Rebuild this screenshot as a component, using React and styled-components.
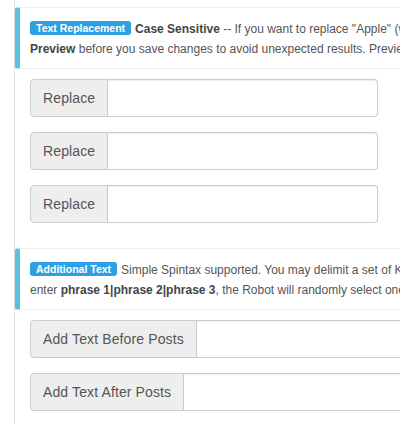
import React from 'react'
import styled, { createGlobalStyle } from 'styled-components'

const GlobalStyle = createGlobalStyle`
  body {
    margin: 0;
    background: #fff;
    font-family: "Liberation Sans", Arial, sans-serif;
  }
`

const Page = styled.div`
  margin-left: 14px;
  border-left: 1px solid #ddd;
  min-height: 424px;
  padding-top: 7px;
  overflow: hidden;
`

const Callout = styled.div`
  border: 1px solid #eee;
  border-left: 5px solid #5bc0de;
  border-radius: 3px;
  margin-right: -20px;
  padding: 11px 10px 9px;
  font-size: 12px;
  line-height: 20px;
  color: #555;
  white-space: nowrap;

  b {
    color: #444;
  }
`

const Line = styled.div`
  overflow: hidden;
`

const Badge = styled.span`
  display: inline-block;
  background: #2d9fe2;
  color: #fff;
  font-size: 10.5px;
  font-weight: bold;
  line-height: 11px;
  padding: 2px 6px 1px;
  border-radius: 3px;
  margin-right: 4px;
  vertical-align: 1px;
`

const Fields = styled.div`
  display: flex;
  flex-direction: column;
  gap: 15px;
  padding: 10px 0 25px 15px;
`

const InputGroup = styled.div`
  display: flex;
  width: ${p => p.$width}px;
  height: 38px;
  flex-shrink: 0;
`

const Addon = styled.span`
  display: flex;
  align-items: center;
  padding: 0 12px;
  background: #eee;
  border: 1px solid #ccc;
  border-radius: 4px 0 0 4px;
  color: #555;
  font-size: 14px;
  letter-spacing: 0.12px;
  white-space: nowrap;
`

const Input = styled.input`
  flex: 1;
  min-width: 0;
  border: 1px solid #ccc;
  border-left: 0;
  border-radius: 0 4px 4px 0;
  box-shadow: inset 0 1px 1px rgba(0, 0, 0, 0.075);
  padding: 0 12px;
  font-size: 14px;
  outline: none;
`

const Field = ({ label, width }) => (
  <InputGroup $width={width}>
    <Addon>{label}</Addon>
    <Input type="text" />
  </InputGroup>
)

export default function App() {
  return (
    <>
      <GlobalStyle />
      <Page>
        <Callout>
          <Line>
            <Badge>Text Replacement</Badge>
            <b>Case Sensitive</b> -- If you want to replace "Apple" (with capital A), enter it exactly as it appears.
          </Line>
          <Line>
            <b>Preview</b> before you save changes to avoid unexpected results. Preview shows the final post.
          </Line>
        </Callout>
        <Fields>
          <Field label="Replace" width={348} />
          <Field label="Replace" width={348} />
          <Field label="Replace" width={348} />
        </Fields>
        <Callout>
          <Line>
            <Badge>Additional Text</Badge>
            Simple Spintax supported. You may delimit a set of Keywords with a pipe, e.g.
          </Line>
          <Line>
            enter <b>phrase 1|phrase 2|phrase 3</b>, the Robot will randomly select one of them.
          </Line>
        </Callout>
        <Fields>
          <Field label="Add Text Before Posts" width={520} />
          <Field label="Add Text After Posts" width={520} />
        </Fields>
      </Page>
    </>
  )
}
